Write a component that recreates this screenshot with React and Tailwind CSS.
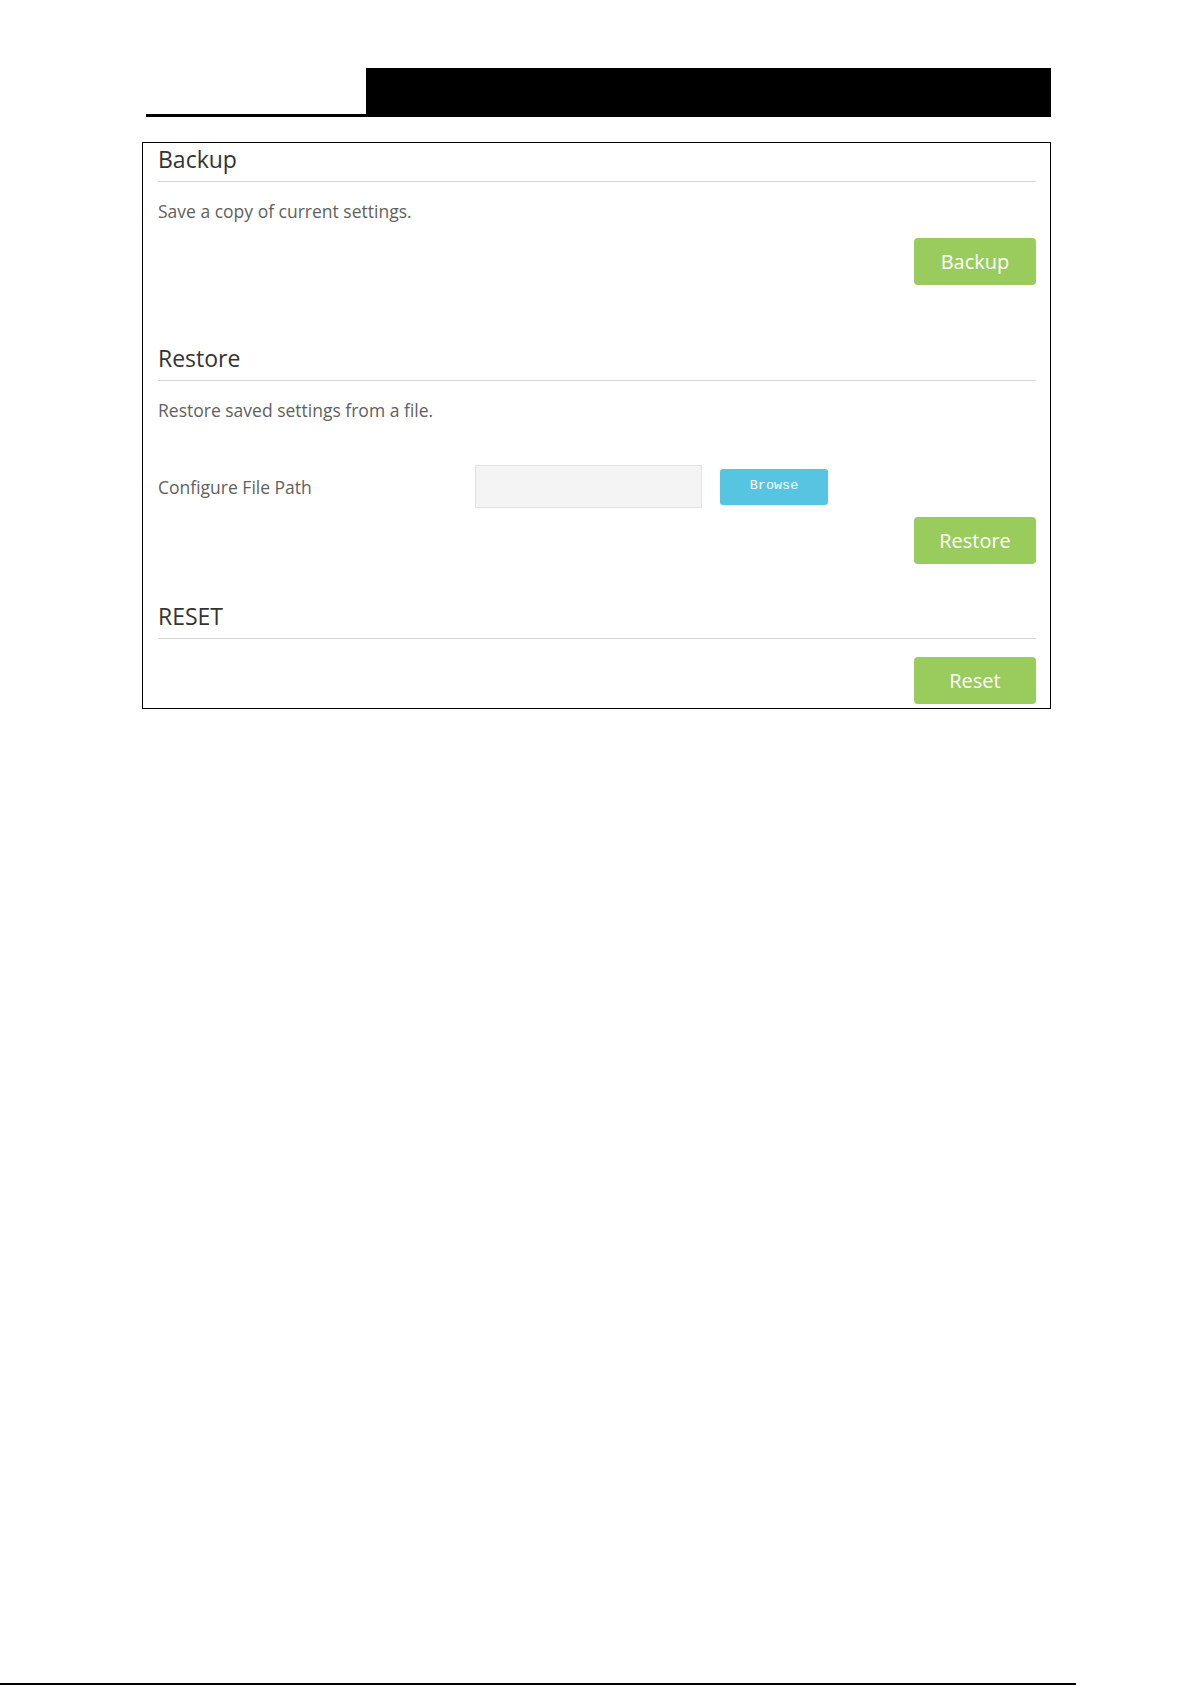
export default function App() {
  const green =
    "w-[122px] h-[47px] rounded-[4px] bg-[#99cc5c] text-white text-[20px] leading-none";
  const heading =
    "h-[39px] leading-[32px] text-[23px] text-[#333] border-b border-[#d6d6d6]";
  const body = "leading-[20px] text-[17.5px] text-[#5f5f5f]";

  return (
    <div
      className="h-[1685px] w-[1192px] flex flex-col bg-white"
      style={{ fontFamily: '"Open Sans", "Noto Sans", sans-serif' }}
    >
      {/* HEADER */}
      <div className="mt-[68px] flex items-end">
        <div className="ml-[146px] w-[220px] h-[3px] bg-black" />
        <div className="w-[685px] h-[49px] bg-black" />
      </div>

      {/* PANEL */}
      <div className="ml-[142px] mt-[25px] w-[909px] h-[567px] border border-black pl-[15px] pr-[14px]">
        {/* BACKUP */}
        <h2 className={heading}>Backup</h2>
        <p className={`mt-[19px] ${body}`}>Save a copy of current settings.</p>
        <div className="mt-[17px] flex justify-end">
          <button className={green}>Backup</button>
        </div>

        {/* RESTORE */}
        <h2 className={`mt-[57px] ${heading}`}>Restore</h2>
        <p className={`mt-[19px] ${body}`}>Restore saved settings from a file.</p>
        <div className="mt-[45px] flex items-center">
          <span className={`w-[317px] ${body}`}>Configure File Path</span>
          <div className="w-[227px] h-[43px] bg-[#f4f4f4] border border-[#e2e2e2]" />
          <button
            className="ml-[18px] w-[108px] h-[36px] rounded-[3px] bg-[#57c5e1] text-white text-[13.5px]"
            style={{ fontFamily: '"Liberation Mono", monospace' }}
          >
            Browse
          </button>
        </div>
        <div className="mt-[9px] flex justify-end">
          <button className={green}>Restore</button>
        </div>

        {/* RESET */}
        <h2 className={`mt-[36px] ${heading}`}>RESET</h2>
        <div className="mt-[18px] flex justify-end">
          <button className={green}>Reset</button>
        </div>
      </div>

      {/* FOOTER RULE */}
      <div className="mt-auto w-[1076px] h-[2px] bg-black" />
    </div>
  );
}
